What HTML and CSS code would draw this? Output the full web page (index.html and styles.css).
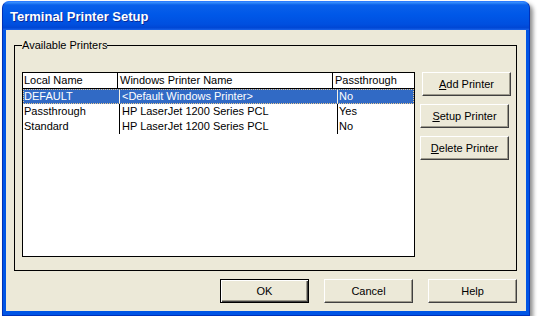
FILE: index.html
```html
<!DOCTYPE html>
<html lang="en">
<head>
  <meta charset="UTF-8" />
  <title>Terminal Printer Setup</title>
  <link rel="stylesheet" href="styles.css">
</head>
<body>

  <div class="window">
    <div class="titlebar">Terminal Printer Setup</div>

    <div class="client">
      <fieldset class="group">
        <legend>Available Printers</legend>

        <div class="group-body">
          <div class="list">
            <div class="list-head">
              <div class="col-local">Local Name</div>
              <div class="col-win">Windows Printer Name</div>
              <div class="col-pass">Passthrough</div>
            </div>
            <div class="row selected">
              <div class="col-local">DEFAULT</div>
              <div class="col-win">&lt;Default Windows Printer&gt;</div>
              <div class="col-pass">No</div>
            </div>
            <div class="row">
              <div class="col-local">Passthrough</div>
              <div class="col-win">HP LaserJet 1200 Series PCL</div>
              <div class="col-pass">Yes</div>
            </div>
            <div class="row">
              <div class="col-local">Standard</div>
              <div class="col-win">HP LaserJet 1200 Series PCL</div>
              <div class="col-pass">No</div>
            </div>
          </div>

          <div class="side-buttons">
            <button class="btn btn-add"><u>A</u>dd Printer</button>
            <button class="btn"><u>S</u>etup Printer</button>
            <button class="btn"><u>D</u>elete Printer</button>
          </div>
        </div>
      </fieldset>

      <div class="bottom-buttons">
        <button class="btn btn-default">OK</button>
        <button class="btn">Cancel</button>
        <button class="btn">Help</button>
      </div>
    </div>
  </div>

</body>
</html>
```

FILE: styles.css
```css
:root {
  --dialog: #ece9d8;
  --frame: #0055e5;
  --frame-edge: #0031b8;
  --select: #316ac5;
  --text: #000000;
}

* {
  box-sizing: border-box;
}

body {
  margin: 0;
  padding: 0;
  background-color: #ffffff;
  font-family: 'Liberation Sans', Arial, sans-serif;
  font-size: 11px;
  color: var(--text);
}

/* window frame */
.window {
  width: 528px;
  height: 315px;
  margin: 1px 0 0 2px;
  display: flex;
  flex-direction: column;
  background-color: var(--frame);
  border: 1px solid var(--frame-edge);
  border-top-color: #2b7bff;
  border-radius: 7px 7px 0 0;
  box-shadow: 3px 3px 4px rgba(0, 0, 0, 0.45);
}

.titlebar {
  height: 28px;
  padding: 0 0 0 7px;
  border-radius: 6px 6px 0 0;
  background: linear-gradient(to bottom, #3d95ff 0, #0a60ea 3px, #0058e8 45%, #004fdf 80%, #0046d4 92%, #1a62e8 100%);
  color: #ffffff;
  font-weight: bold;
  font-size: 13px;
  line-height: 29px;
  text-shadow: 1px 1px 0 #0a2a9a;
}

.client {
  flex: 1;
  margin: 0 3px 4px 3px;
  padding: 0 9px 0 8px;
  background-color: var(--dialog);
  display: flex;
  flex-direction: column;
}

/* group box */
.group {
  margin: 9px 0 0 0;
  padding: 20px 0 13px 7px;
  border: 1px solid #000000;
  min-width: 0;
}

.group legend {
  padding: 0;
  line-height: 13px;
  font-size: 11px;
}

.group-body {
  display: flex;
  gap: 5px;
}

/* list view */
.list {
  width: 393px;
  height: 185px;
  border: 1px solid #000000;
  background-color: #ffffff;
}

.list-head {
  display: flex;
  height: 16px;
  line-height: 15px;
  border-bottom: 1px solid #000000;
}

.list-head .col-local {
  width: 95px;
  padding-left: 1px;
  border-right: 1px solid #000000;
}

.list-head .col-win {
  width: 215px;
  padding-left: 2px;
  border-right: 1px solid #000000;
}

.list-head .col-pass {
  flex: 1;
  padding-left: 2px;
}

.row {
  display: flex;
  height: 15px;
  line-height: 15px;
  white-space: nowrap;
}

.row .col-local {
  width: 96px;
  padding-left: 1px;
}

.row .col-win {
  width: 218px;
  padding-left: 2px;
  border-left: 1px solid #000000;
}

.row .col-pass {
  flex: 1;
  padding-left: 1px;
  border-left: 1px solid #000000;
}

.row.selected {
  background-color: var(--select);
  color: #ffffff;
  outline: 1px dotted #e8c890;
  outline-offset: -1px;
}

.row.selected .col-win,
.row.selected .col-pass {
  border-left-color: #f4f0e4;
}

/* buttons */
.btn {
  width: 89px;
  height: 24px;
  padding: 0;
  font-family: 'Liberation Sans', Arial, sans-serif;
  font-size: 11px;
  color: #000000;
  background-color: var(--dialog);
  border: 1px solid;
  border-color: #ffffff #404040 #404040 #ffffff;
  box-shadow: inset -1px -1px 0 #9d9a8c;
  cursor: pointer;
}

.btn u {
  text-decoration-thickness: 1px;
  text-underline-offset: 1px;
}

.side-buttons {
  display: flex;
  flex-direction: column;
  gap: 8px;
}

.btn-add {
  margin-left: 2px;
}

.bottom-buttons {
  display: flex;
  justify-content: flex-end;
  gap: 15px;
  margin-top: 8px;
}

.btn-default {
  border: 1px solid #000000;
  box-shadow: inset 1px 1px 0 #ffffff, inset -1px -1px 0 #404040, inset -2px -2px 0 #9d9a8c;
}
```
